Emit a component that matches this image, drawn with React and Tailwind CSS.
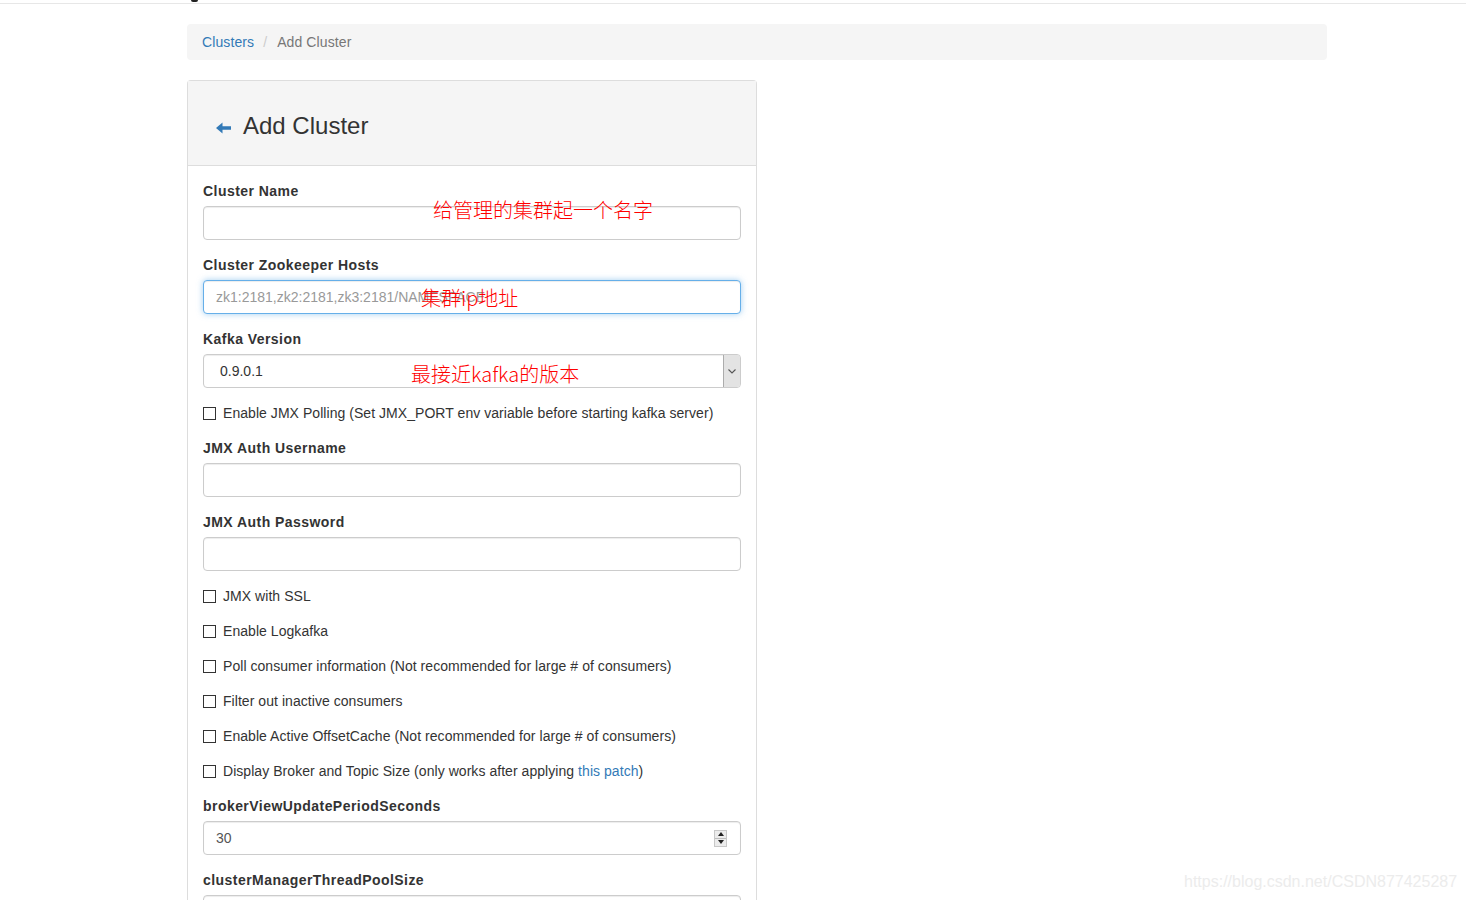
import React from "react";

const font = { fontFamily: '"Liberation Sans", Arial, sans-serif' };

function Label({ children }) {
  return (
    <label className="block h-[20px] leading-[20px] mb-[5px] text-[14px] font-bold text-[#333] tracking-[0.45px]">
      {children}
    </label>
  );
}

function TextInput({ focus, placeholder }) {
  return (
    <div
      className={
        "h-[34px] rounded-[4px] border bg-white px-[12px] flex items-center text-[14px] " +
        (focus
          ? "border-[#66afe9] shadow-[inset_0_1px_1px_rgba(0,0,0,0.075),0_0_6px_rgba(102,175,233,0.6)]"
          : "border-[#ccc] shadow-[inset_0_1px_1px_rgba(0,0,0,0.075)]")
      }
    >
      {placeholder ? <span className="text-[#999]">{placeholder}</span> : null}
    </div>
  );
}

function Check({ children }) {
  return (
    <div className="h-[20px] flex items-center mb-[15px] text-[14px] text-[#333] tracking-[0.05px]">
      <span className="w-[13px] h-[13px] border border-[#333] bg-white mr-[7px] shrink-0" />
      <span>{children}</span>
    </div>
  );
}

function Annot({ children, className }) {
  return (
    <span
      className={"absolute text-[20px] leading-[20px] text-[#ff0000] whitespace-nowrap " + className}
      style={{ fontFamily: '"Noto Sans CJK SC", "DejaVu Serif", serif', fontWeight: 300 }}
    >
      {children}
    </span>
  );
}

export default function App() {
  return (
    <div className="relative min-h-[900px] bg-white overflow-hidden" style={font}>
      <div className="h-[4px] border-b border-[#e7e7e7] bg-white flex">
        <span className="ml-[191px] w-[7px] h-[2px] rounded-b-full bg-[#222]" />
      </div>

      <div className="ml-[187px] w-[1140px] mt-[20px]">
        <div className="h-[36px] rounded-[4px] bg-[#f5f5f5] px-[15px] flex items-center text-[14px] tracking-[0.1px]">
          <span className="text-[#337ab7]">Clusters</span>
          <span className="text-[#ccc] pl-[9px] pr-[10px]">/</span>
          <span className="text-[#777]">Add Cluster</span>
        </div>

        <div className="mt-[20px] w-[570px] border border-[#ddd] rounded-t-[4px] border-b-0">
          <div className="h-[85px] bg-[#f5f5f5] border-b border-[#ddd] flex items-center pl-[28px] pt-[6px]">
            <svg width="15" height="12" viewBox="0 0 15 12" className="mr-[12px] mt-[3px]">
              <path d="M0 6 L6.5 0.5 L6.5 4.2 L15 4.2 L15 7.8 L6.5 7.8 L6.5 11.5 Z" fill="#337ab7" />
            </svg>
            <span className="text-[24px] leading-[26px] text-[#333]">Add Cluster</span>
          </div>

          <div className="relative px-[15px] pt-[15px]">
            <div className="mb-[15px]">
              <Label>Cluster Name</Label>
              <TextInput />
            </div>
            <div className="mb-[15px]">
              <Label>Cluster Zookeeper Hosts</Label>
              <TextInput focus placeholder="zk1:2181,zk2:2181,zk3:2181/NAMESPACE" />
            </div>
            <div className="mb-[15px]">
              <Label>Kafka Version</Label>
              <div className="h-[34px] rounded-[4px] border border-[#ccc] bg-white flex items-stretch text-[14px] text-[#333] shadow-[inset_0_1px_1px_rgba(0,0,0,0.075)]">
                <span className="flex-1 flex items-center pl-[16px]">0.9.0.1</span>
                <span className="w-[17px] bg-[#e3e3e3] border-l border-[#acacac] rounded-r-[3px] flex items-center justify-center">
                  <svg width="8" height="5" viewBox="0 0 8 5">
                    <path d="M0.5 0.5 L4 4 L7.5 0.5" fill="none" stroke="#555" strokeWidth="1.1" />
                  </svg>
                </span>
              </div>
            </div>
            <Check>Enable JMX Polling (Set JMX_PORT env variable before starting kafka server)</Check>
            <div className="mb-[15px]">
              <Label>JMX Auth Username</Label>
              <TextInput />
            </div>
            <div className="mb-[15px]">
              <Label>JMX Auth Password</Label>
              <TextInput />
            </div>
            <Check>JMX with SSL</Check>
            <Check>Enable Logkafka</Check>
            <Check>Poll consumer information (Not recommended for large # of consumers)</Check>
            <Check>Filter out inactive consumers</Check>
            <Check>Enable Active OffsetCache (Not recommended for large # of consumers)</Check>
            <Check>
              Display Broker and Topic Size (only works after applying{" "}
              <span className="text-[#337ab7]">this patch</span>)
            </Check>
            <div className="mb-[15px]">
              <Label>brokerViewUpdatePeriodSeconds</Label>
              <div className="h-[34px] rounded-[4px] border border-[#ccc] bg-white pl-[12px] pr-[13px] flex items-center text-[14px] text-[#555] shadow-[inset_0_1px_1px_rgba(0,0,0,0.075)]">
                <span className="flex-1">30</span>
                <span className="w-[13px] h-[17px] flex flex-col border border-[#c8c8c8] bg-[#ececec]">
                  <span className="flex-1 flex items-center justify-center border-b border-[#bdbdbd]">
                    <svg width="6" height="4" viewBox="0 0 6 4"><path d="M0 4 L3 0 L6 4 Z" fill="#222" /></svg>
                  </span>
                  <span className="flex-1 flex items-center justify-center">
                    <svg width="6" height="4" viewBox="0 0 6 4"><path d="M0 0 L3 4 L6 0 Z" fill="#222" /></svg>
                  </span>
                </span>
              </div>
            </div>
            <div className="mb-[15px]">
              <Label>clusterManagerThreadPoolSize</Label>
              <TextInput />
            </div>

            <Annot className="left-[245px] top-[34px]">给管理的集群起一个名字</Annot>
            <Annot className="left-[233px] top-[122px]">集群ip地址</Annot>
            <Annot className="left-[223px] top-[198px]">最接近kafka的版本</Annot>
          </div>
        </div>
      </div>

      <div className="absolute left-[1184px] top-[871px] text-[16px] leading-[22px] text-[#ececec] whitespace-nowrap">
        https://blog.csdn.net/CSDN877425287
      </div>
    </div>
  );
}
